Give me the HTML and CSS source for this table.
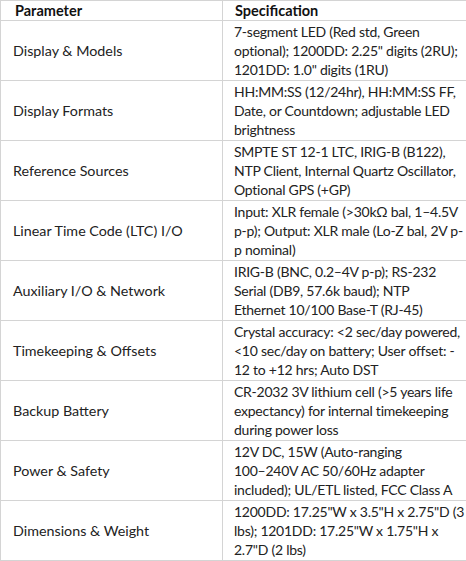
FILE: index.html
```html
<!DOCTYPE html>
<html lang="en">
<head>
    <meta charset="UTF-8">
    <meta name="viewport" content="width=device-width, initial-scale=1.0">
    <title>Specifications</title>
    <link rel="stylesheet" href="styles.css">
</head>
<body>
    <table class="spec-table">
        <colgroup>
            <col class="col-param">
            <col class="col-spec">
        </colgroup>
        <thead>
            <tr>
                <th class="param">Parameter</th>
                <th class="spec">Specification</th>
            </tr>
        </thead>
        <tbody>
            <tr>
                <td class="param">Display &amp; Models</td>
                <td class="spec">7-segment LED (Red std, Green optional); 1200DD: 2.25" digits (2RU); 1201DD: 1.0" digits (1RU)</td>
            </tr>
            <tr>
                <td class="param">Display Formats</td>
                <td class="spec">HH:MM:SS (12/24hr), HH:MM:SS FF, Date, or Countdown; adjustable LED brightness</td>
            </tr>
            <tr>
                <td class="param">Reference Sources</td>
                <td class="spec">SMPTE ST 12-1 LTC, IRIG-B (B122), NTP Client, Internal Quartz Oscillator, Optional GPS (+GP)</td>
            </tr>
            <tr>
                <td class="param">Linear Time Code (LTC) I/O</td>
                <td class="spec">Input: XLR female (&gt;30kΩ bal, 1–4.5V p-p); Output: XLR male (Lo-Z bal, 2V p-p nominal)</td>
            </tr>
            <tr>
                <td class="param">Auxiliary I/O &amp; Network</td>
                <td class="spec">IRIG-B (BNC, 0.2–4V p-p); RS-232 Serial (DB9, 57.6k baud); NTP <span class="nobr">Ethernet 10/100</span> Base-T (RJ-45)</td>
            </tr>
            <tr>
                <td class="param">Timekeeping &amp; Offsets</td>
                <td class="spec">Crystal accuracy: &lt;2 sec/day powered, &lt;10 sec/day on battery; User offset: -<wbr>12 to +12 hrs; Auto DST</td>
            </tr>
            <tr>
                <td class="param">Backup Battery</td>
                <td class="spec">CR-2032 3V lithium cell (&gt;5 years life expectancy) for internal timekeeping during power loss</td>
            </tr>
            <tr>
                <td class="param">Power &amp; Safety</td>
                <td class="spec">12V DC, 15W (Auto-ranging <span class="nobr">100–240V</span> AC 50/60Hz adapter included); UL/ETL listed, FCC Class A</td>
            </tr>
            <tr>
                <td class="param">Dimensions &amp; Weight</td>
                <td class="spec">1200DD: 17.25"W x 3.5"H x 2.75"D (3 lbs); 1201DD: 17.25"W x 1.75"H x 2.7"D (2 lbs)</td>
            </tr>
        </tbody>
    </table>
</body>
</html>
```

FILE: styles.css
```css
body {
    margin: 0;
    padding: 0;
    background-color: #fff;
    font-family: Lato, "Open Sans", sans-serif;
    font-size: 14px;
    color: #222;
}
.spec-table {
    width: 466px;
    border-collapse: collapse;
    table-layout: fixed;
}
.col-param {
    width: 222px;
}
.col-spec {
    width: 244px;
}
.spec-table th,
.spec-table td {
    border: 1px solid #d4d4d4;
    text-align: left;
    vertical-align: middle;
    line-height: 19px;
}
.spec-table th {
    height: 19px;
    padding: 0 0 0 14px;
    font-size: 14.5px;
    font-weight: bold;
    color: #111;
}
.spec-table td {
    height: 59px;
    padding: 0 0 0 12px;
}
.spec-table td.param {
    font-size: 14.3px;
}
.spec-table td.spec {
    padding-left: 11px;
    letter-spacing: -0.25px;
}
.spec-table th.spec {
    padding-left: 12px;
}
.nobr {
    white-space: nowrap;
}
```
